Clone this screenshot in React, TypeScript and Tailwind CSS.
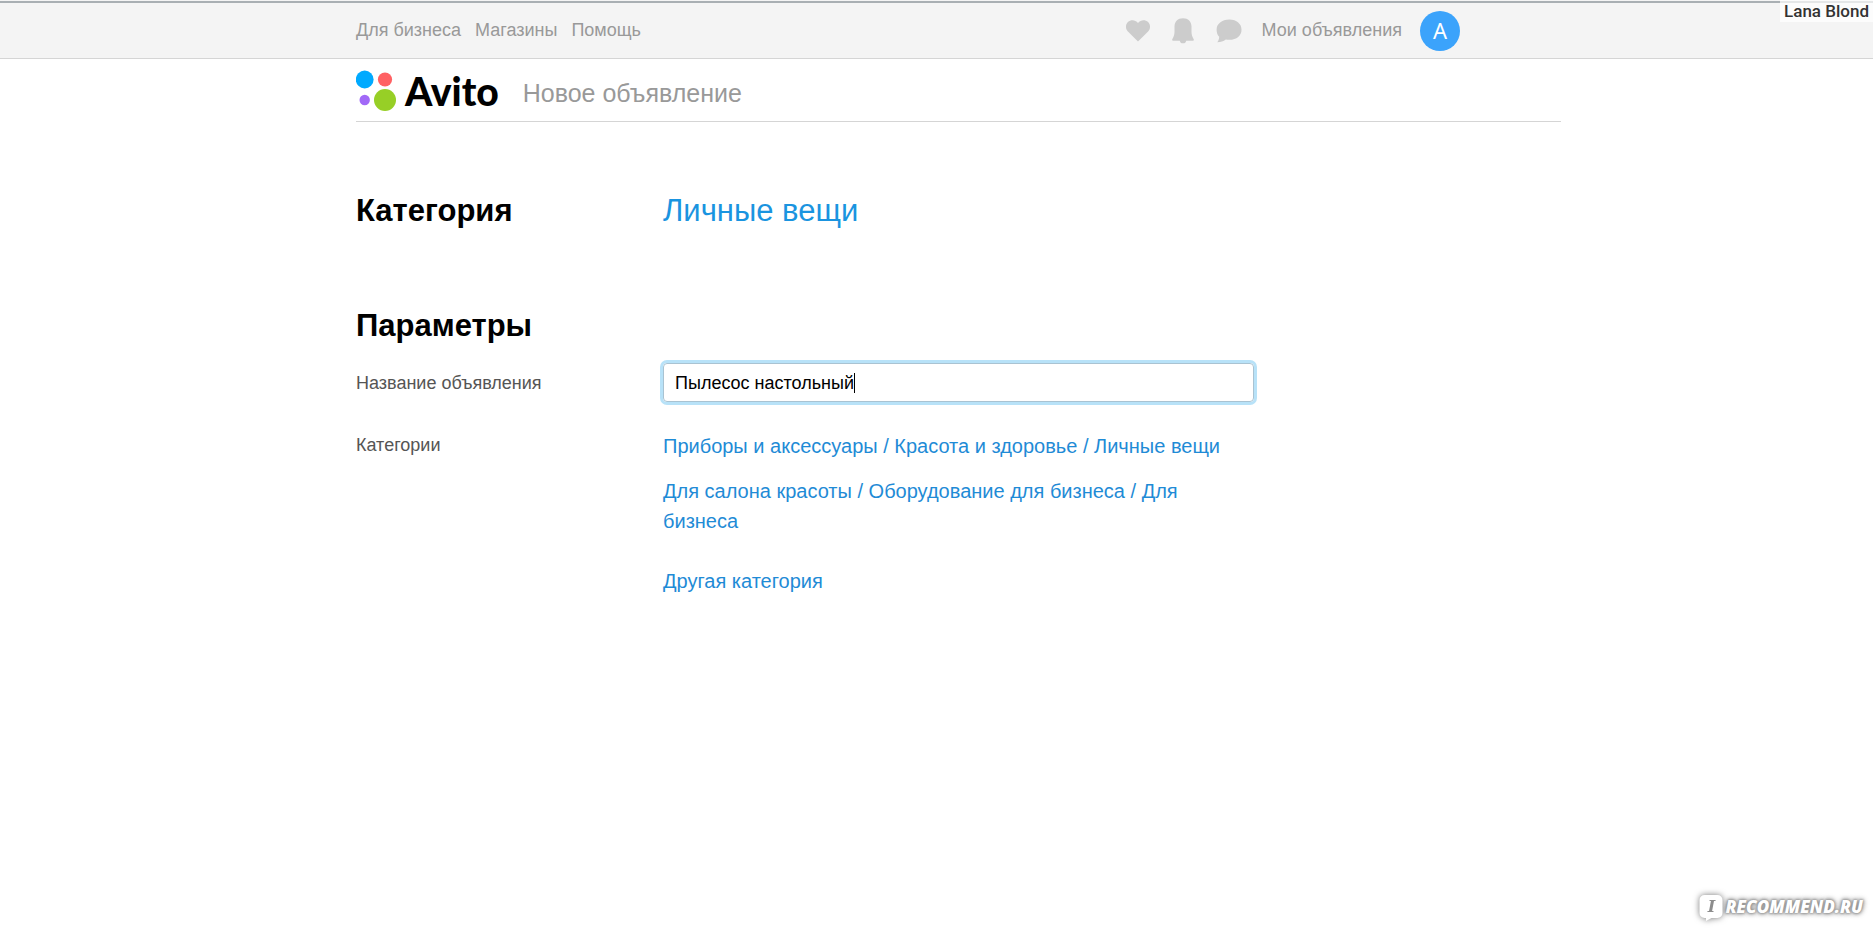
import { useState } from "react";

const topLinks = ["Для бизнеса", "Магазины", "Помощь"];

const suggestions = [
  "Приборы и аксессуары / Красота и здоровье / Личные вещи",
  "Для салона красоты / Оборудование для бизнеса / Для бизнеса",
];

function HeartIcon() {
  return (
    <svg width="24" height="22" viewBox="0 0 24 22" fill="currentColor" aria-hidden="true">
      <path d="M12 21.5 1.900 11.500C-.7 8.800-.6 4.600 1.900 2.100 4.700-.5 9.300-.4 12 2.900 14.700-.4 19.300-.5 22.100 2.100c2.500 2.500 2.600 6.700 0 9.400Z" />
    </svg>
  );
}

function BellIcon() {
  return (
    <svg width="22" height="26" viewBox="0 0 22 26" fill="currentColor" aria-hidden="true">
      <path d="M11 .3c5.200 0 8.500 3.500 8.500 8.300v5.200c0 2.600.6 4.600 2.200 7.500.4.800.1 1.400-.8 1.400h-6.700c-.2 1.700-1.300 2.600-3.200 2.600s-3-.9-3.200-2.600H1.100c-.9 0-1.200-.6-.8-1.400 1.600-2.900 2.200-4.900 2.200-7.500V8.600C2.500 3.800 5.800.3 11 .3Z" />
    </svg>
  );
}

function ChatIcon() {
  return (
    <svg width="26" height="24" viewBox="0 0 26 24" fill="currentColor" aria-hidden="true">
      <path d="M13.300.5C20.800.5 25.500 4.800 25.500 10.700S20.800 20.800 13.300 20.800c-1.200 0-2.400-.1-3.500-.4-2.300 1.700-5.100 2.700-8.500 2.900 1.300-1.700 1.900-3.500 1.900-5.500C1.500 16 .6 13.600.6 10.700.6 4.800 5.800.5 13.300.5Z" />
    </svg>
  );
}

function LogoMark() {
  return (
    <svg width="40" height="42" viewBox="0 0 40 42" aria-hidden="true">
      <circle cx="8.700" cy="9.500" r="8.900" fill="#00aaff" />
      <circle cx="29" cy="9.500" r="7.100" fill="#ff6163" />
      <circle cx="8.700" cy="30" r="5.200" fill="#a169f7" />
      <circle cx="29" cy="30" r="11" fill="#97cf26" />
    </svg>
  );
}

function Watermark() {
  return (
    <div className="absolute right-2.5 bottom-[11px] flex items-center gap-0.5">
      <div className="relative flex h-7 w-6 items-start justify-center drop-shadow-[0_0_3px_#777777]">
        <svg className="absolute inset-0" width="24" height="28" viewBox="0 0 24 28" aria-hidden="true">
          <path d="M5.500 2h13a5 5 0 0 1 5 5v13a5 5 0 0 1-5 5h-6L7 28v-3H5.500a5 5 0 0 1-5-5V7a5 5 0 0 1 5-5Z" fill="#ffffff" />
        </svg>
        <span className="relative pt-0.5 font-['DejaVu_Serif',serif] text-base leading-6 font-bold text-[#8c8c8c] italic">I</span>
      </div>
      <span className="font-['Open_Sans',sans-serif] text-[17px] leading-6 font-extrabold text-white italic [text-shadow:0_0_2px_#999999,0_0_3px_#888888,0_0_5px_#888888,0_0_6px_#aaaaaa]">
        RECOMMEND.RU
      </span>
    </div>
  );
}

export default function App() {
  const [title, setTitle] = useState("Пылесос настольный");

  return (
    <div className="relative min-h-screen bg-white font-['Liberation_Sans',Arial,sans-serif] text-black">
      <header className="border-b border-[#d5d5d5] bg-[#f4f4f4] pt-px">
        <div className="h-0.5 bg-[#a9afb3]" />
        <div className="mx-auto flex h-[55px] max-w-[1249px] items-center justify-between pr-[101px] pl-11 text-lg text-[#999999]">
          <nav className="flex gap-3.5 pb-0.5">
            {topLinks.map((link) => (
              <a key={link} href="#">
                {link}
              </a>
            ))}
          </nav>
          <div className="flex items-center gap-5">
            <div className="flex items-center gap-[22px] pt-px text-[#cccccc]">
              <a href="#" aria-label="Избранное">
                <HeartIcon />
              </a>
              <a href="#" aria-label="Уведомления">
                <BellIcon />
              </a>
              <a href="#" aria-label="Сообщения">
                <ChatIcon />
              </a>
            </div>
            <div className="flex items-center gap-[18px]">
              <a href="#" className="pb-0.5">
                Мои объявления
              </a>
              <button
                type="button"
                className="flex size-10 items-center justify-center rounded-full bg-[#3ba3fb] font-['Noto_Sans',sans-serif] text-[22px] text-white"
              >
                A
              </button>
            </div>
          </div>
        </div>
      </header>

      <div className="absolute top-0 right-0 bg-white/70 px-1 font-[Roboto,sans-serif] text-[17px] leading-[22px] font-medium text-[#333333]">
        Lana Blond
      </div>

      <main className="mx-auto max-w-[1249px] pl-11">
        <div className="flex h-[63px] items-center border-b border-[#d5d5d5] pt-0.5">
          <a href="#" aria-label="Avito" className="flex items-center gap-[9px]">
            <LogoMark />
            <span className="font-[Lato,sans-serif] text-[39px] leading-[48px] font-black">Avito</span>
          </a>
          <p className="pt-1 pl-6 text-[25px] leading-8 text-[#999999]">Новое объявление</p>
        </div>

        <section className="grid grid-cols-[307px_minmax(0,591px)] pt-[71px]">
          <h2 className="text-[31px] leading-9 font-bold">Категория</h2>
          <a href="#" className="text-[31px] leading-9 text-[#1a94e0]">
            Личные вещи
          </a>
        </section>

        <section className="pt-[79px]">
          <h2 className="text-[31px] leading-9 font-bold">Параметры</h2>
          <div className="grid grid-cols-[307px_minmax(0,591px)] items-center pt-[19px]">
            <label htmlFor="title" className="text-lg text-[#555555]">
              Название объявления
            </label>
            <div className="flex h-[39px] items-center rounded-[4px] border border-[#a9c3d2] pl-[11px] ring-3 ring-[#b8e2f8]">
              <input
                id="title"
                type="text"
                value={title}
                onChange={(event) => setTitle(event.target.value)}
                className="[field-sizing:content] text-lg caret-transparent outline-none"
              />
              <span className="h-5 w-px bg-black" />
            </div>
          </div>
          <div className="grid grid-cols-[307px_minmax(0,591px)] pt-[29px]">
            <h3 className="text-lg leading-7 text-[#555555]">Категории</h3>
            <ul className="text-xl leading-[30px] text-[#1f8bd6]">
              {suggestions.map((item) => (
                <li key={item} className="pb-[15px]">
                  <a href="#">{item}</a>
                </li>
              ))}
              <li className="pt-[15px]">
                <a href="#">Другая категория</a>
              </li>
            </ul>
          </div>
        </section>
      </main>

      <Watermark />
    </div>
  );
}
